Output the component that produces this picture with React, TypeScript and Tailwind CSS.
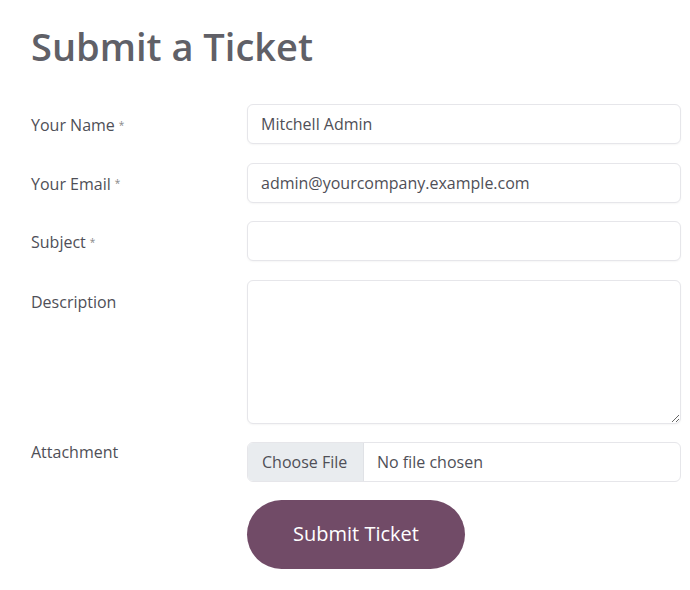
import React from "react";

const Req = () => <span className="ml-1 text-[10px] align-[2px] text-[#888]">*</span>;

const Label = ({children, required, top}: {children: React.ReactNode; required?: boolean; top?: boolean}) => (
  <div className={`text-[16px] text-[#4f4f57] ${top ? "pt-[10px]" : "flex items-center h-[40px] pt-[2px]"}`}>
    <span>{children}</span>
    {required && <Req/>}
  </div>
);

const inputCls =
  "w-full h-[40px] rounded-[6px] border border-[#e6e6ea] bg-white px-[13px] text-[16px] text-[#4f4f57] outline-none shadow-[0_1px_2px_rgba(0,0,0,0.04)]";

export default function App() {
  return (
    <div className="min-h-screen w-[690px] bg-white pl-[31px] pr-[9px] pt-[22px]" style={{fontFamily: '"Open Sans", "Noto Sans", sans-serif'}}>
      <h1 className="text-[38px] font-semibold leading-[48px] text-[#606067] mb-[34px]">Submit a Ticket</h1>
      <form className="grid grid-cols-[216px_1fr] gap-y-[18.5px]">
        <Label required>Your Name</Label>
        <input className={inputCls} defaultValue="Mitchell Admin"/>

        <Label required>Your Email</Label>
        <input className={inputCls} defaultValue="admin@yourcompany.example.com"/>

        <Label required>Subject</Label>
        <input className={inputCls}/>

        <Label top>Description</Label>
        <textarea className="w-full h-[144px] rounded-[6px] border border-[#e6e6ea] bg-white px-[13px] py-[8px] text-[16px] text-[#4f4f57] outline-none shadow-[0_1px_2px_rgba(0,0,0,0.04)]"/>

        <div className="text-[16px] text-[#4f4f57] -mt-[2px]">Attachment</div>
        <div className="flex h-[40px] w-full overflow-hidden rounded-[6px] border border-[#e6e6ea] bg-white text-[16px] text-[#4f4f57]">
          <span className="flex items-center bg-[#e9ecef] px-[14px] w-[116px] border-r border-[#e0e2e6]">Choose File</span>
          <span className="flex items-center px-[13px]">No file chosen</span>
        </div>

        <div/>
        <div className="-mt-[1px]">
          <button type="button" className="h-[69px] w-[218px] rounded-full bg-[#714b67] text-[20px] font-medium text-white">
            Submit Ticket
          </button>
        </div>
      </form>
    </div>
  );
}
